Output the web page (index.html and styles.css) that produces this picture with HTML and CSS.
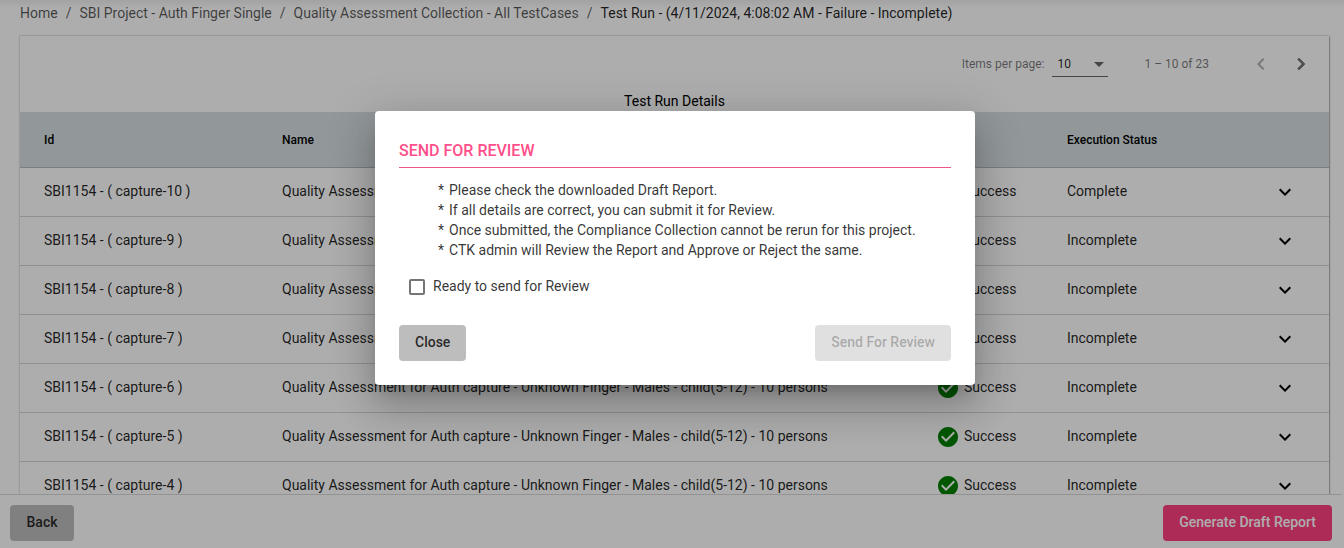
FILE: index.html
```html
<!DOCTYPE html>
<html lang="en">
<head>
<meta charset="utf-8">
<title>Test Run</title>
<link rel="stylesheet" href="styles.css">
</head>
<body>
<div class="page">
  <nav class="crumbs">
    <a>Home</a><i>/</i><a>SBI Project - Auth Finger Single</a><i>/</i><a>Quality Assessment Collection - All TestCases</a><i>/</i><b>Test Run - (4/11/2024, 4:08:02 AM - Failure - Incomplete)</b>
  </nav>
  <main class="card">
    <div class="paginator">
      <span class="per-page">Items per page:</span>
      <span class="select">10<svg width="10" height="5" viewBox="0 0 10 5"><path d="M0 0h10L5 5z"/></svg></span>
      <span class="range">1 – 10 of 23</span>
      <svg class="nav off" viewBox="0 0 24 24"><path d="M15.41 7.41L14 6l-6 6 6 6 1.41-1.41L10.83 12z"/></svg>
      <svg class="nav" viewBox="0 0 24 24"><path d="M10 6L8.59 7.41 13.17 12l-4.58 4.59L10 18l6-6z"/></svg>
    </div>
    <h2 class="title">Test Run Details</h2>
    <div class="row head"><span>Id</span><span>Name</span><span></span><span>Execution Status</span></div>
    <div id="rows"></div>
  </main>
  <footer class="footer">
    <button class="btn gray">Back</button>
    <button class="btn pink">Generate Draft Report</button>
  </footer>
</div>
<div class="backdrop">
  <section class="dialog">
    <h3>SEND FOR REVIEW</h3>
    <ul>
      <li>Please check the downloaded Draft Report.</li>
      <li>If all details are correct, you can submit it for Review.</li>
      <li>Once submitted, the Compliance Collection cannot be rerun for this project.</li>
      <li>CTK admin will Review the Report and Approve or Reject the same.</li>
    </ul>
    <label class="check"><span class="box"></span>Ready to send for Review</label>
    <div class="actions">
      <button class="btn gray">Close</button>
      <button class="btn disabled">Send For Review</button>
    </div>
  </section>
</div>
<script src="rows.js"></script>
</body>
</html>
```
FILE: styles.css
```css
* { box-sizing: border-box; }
body { margin: 0; height: 548px; overflow: hidden; font: 400 14px/20px Roboto, sans-serif; color: rgba(0,0,0,.87); background: #fff; }
.page { height: 548px; display: flex; flex-direction: column; background: linear-gradient(#f0f0f0, #fff 8px); }
.crumbs { flex: none; height: 36px; padding: 3px 20px 0; white-space: nowrap; color: rgba(0,0,0,.66); }
.crumbs i { font-style: normal; margin: 0 8px; }
.crumbs b { font-weight: 400; color: rgba(0,0,0,.87); }
.card { flex: 1; min-height: 0; overflow: hidden; margin: 0 14px 0 20px; width: 1309px; box-shadow: 0 0 2px rgba(0,0,0,.35), 1px 1px 1px rgba(0,0,0,.2); }
.paginator { height: 56px; display: flex; align-items: center; justify-content: flex-end; font-size: 12px; color: rgba(0,0,0,.54); }
.per-page { margin-right: 8px; }
.select { width: 56px; height: 26px; border-bottom: 1px solid rgba(0,0,0,.6); padding: 3px 4px 0 5px; display: flex; justify-content: space-between; color: rgba(0,0,0,.87); }
.select svg { margin-top: 8px; fill: rgba(0,0,0,.6); }
.range { margin: 0 40px 0 36px; }
.nav { width: 24px; height: 24px; margin-right: 16px; fill: rgba(0,0,0,.54); stroke: rgba(0,0,0,.54); stroke-width: .5; }
.nav.off { fill: rgba(0,0,0,.3); stroke: none; }
.title { margin: 0; height: 20px; font-size: 14px; line-height: 18px; font-weight: 400; text-align: center; color: #000; }
.row { display: grid; grid-template-columns: 238px 655px 130px 1fr 24px; align-items: center; height: 49px; padding: 0 32px 2px 24px; border-bottom: 1px solid rgba(0,0,0,.17); }
.row.head { height: 56px; padding-bottom: 0; background: #d8e0e4; font-size: 12px; font-weight: 500; color: #000; }
.result { display: flex; align-items: center; }
.result svg { width: 24px; height: 24px; margin: 2px 4px 0 -1px; fill: green; }
.chevron { width: 24px; height: 24px; margin-top: 2px; fill: #000; }
.footer { flex: none; height: 54px; border-top: 1px solid rgba(0,0,0,.15); width: 1342px; padding: 10px 10px 8px; display: flex; justify-content: space-between; background: #fff; }
.btn { height: 36px; border: 0; border-radius: 4px; padding: 0 16px 2px; font: 500 14px/34px Roboto, sans-serif; color: rgba(0,0,0,.8); }
.footer .gray { width: 64px; }
.gray { background: #bdbdbd; }
.pink { background: #ff4081; color: #fff; }
.disabled { background: #e0e0e0; color: rgba(0,0,0,.26); }
.backdrop { position: absolute; inset: 0; background: rgba(0,0,0,.32); }
.dialog { width: 600px; height: 274px; margin: 111px auto 0 375px; padding: 24px; border-radius: 4px; background: #fff; color: rgba(0,0,0,.8); box-shadow: 0 11px 15px -7px rgba(0,0,0,.2), 0 24px 38px 3px rgba(0,0,0,.14), 0 9px 46px 8px rgba(0,0,0,.12); }
.dialog h3 { margin: 0; height: 33px; padding-top: 6px; font-size: 16px; line-height: 20px; font-weight: 500; color: #ff4f8b; border-bottom: 1px solid #f0568c; }
.dialog ul { list-style: none; margin: 12px 0 0; padding: 0 0 0 39px; }
.dialog li::before { content: "*"; margin-right: 5px; }
.check { display: flex; align-items: center; margin: 16px 0 0 10px; height: 20px; }
.box { width: 16px; height: 16px; border: 2px solid rgba(0,0,0,.54); border-radius: 2px; margin: 2px 8px 0 0; }
.actions { display: flex; justify-content: space-between; margin-top: 29px; }
```
FILE: rows.js
```js
const statuses = ["Complete", "Incomplete", "Incomplete", "Incomplete", "Incomplete", "Incomplete", "Incomplete"];
document.getElementById("rows").innerHTML = statuses.map((status, i) => `
  <div class="row">
    <span>SBI1154 - ( capture-${10 - i} )</span>
    <span>Quality Assessment for Auth capture - Unknown Finger - Males - child(5-12) - 10 persons</span>
    <span class="result"><svg viewBox="0 0 24 24"><path d="M12 2C6.48 2 2 6.48 2 12s4.48 10 10 10 10-4.48 10-10S17.52 2 12 2zm-2 15l-5-5 1.41-1.41L10 14.17l7.59-7.59L19 8l-9 9z"/></svg>Success</span>
    <span>${status}</span>
    <svg class="chevron" viewBox="0 0 24 24"><path d="M7.41 8.59L12 13.17l4.59-4.58L18 10l-6 6-6-6z"/></svg>
  </div>`).join("");
```
